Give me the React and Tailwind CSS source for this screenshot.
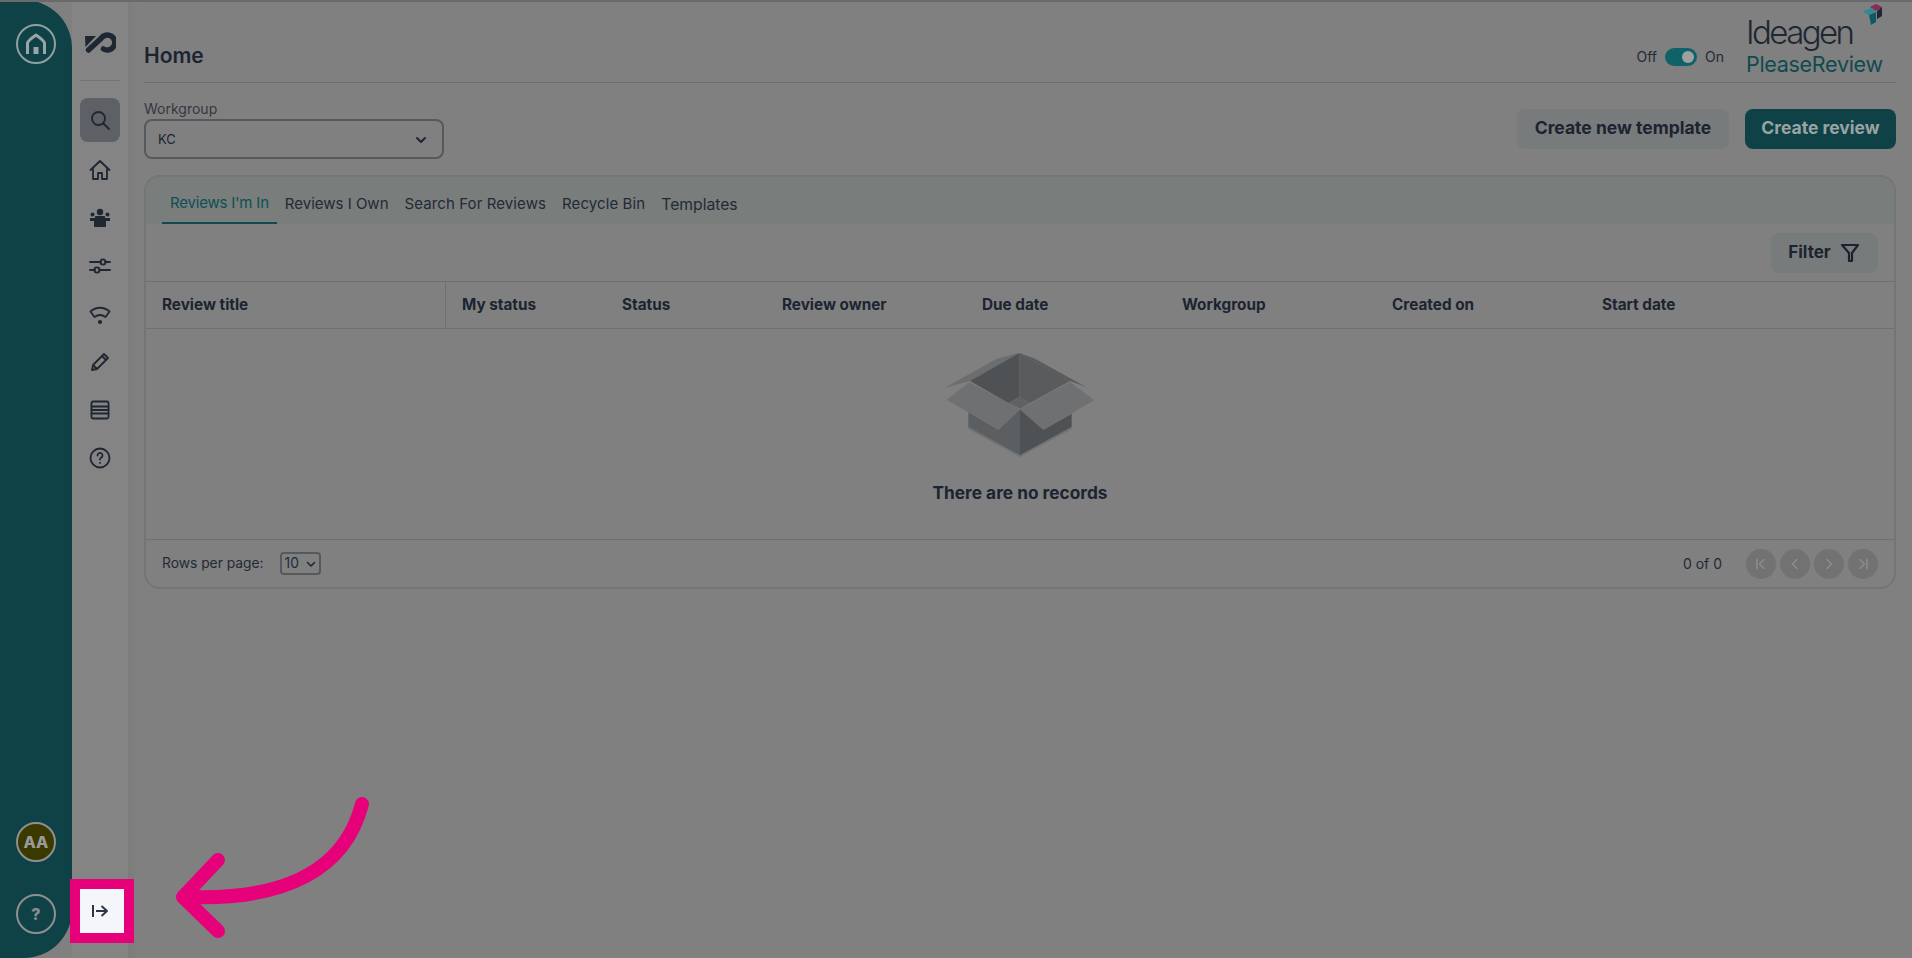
import React from "react";

const FONT = "font-['Inter','Liberation_Sans',sans-serif]";

function NavIcon({ children, active }) {
  return (
    <div className={active ? "flex h-11 w-10 items-center justify-center rounded-lg bg-[#5d6165]" : "flex h-12 w-10 items-center justify-center"}>
      <svg width="24" height="24" viewBox="0 0 24 24" fill="none" stroke="#1f2732" strokeWidth="1.8" strokeLinecap="round" strokeLinejoin="round">
        {children}
      </svg>
    </div>
  );
}

function Box() {
  return (
    <svg width="150" height="104" viewBox="195 68 450 312">
      <polygon points="195,172 350,85 418,68 270,152" fill="#6b6d6e" />
      <polygon points="418,68 465,85 618,170 570,152" fill="#595b5d" />
      <polygon points="270,152 418,68 418,200 385,218" fill="#4f5255" />
      <polygon points="418,68 570,152 450,218 418,200" fill="#595b5d" />
      <polygon points="385,218 418,200 450,218 420,235" fill="#606264" />
      <polygon points="265,245 355,298 420,237 420,375 265,290" fill="#5c5f61" />
      <polygon points="420,237 490,298 575,250 575,290 420,375" fill="#4f5255" />
      <polygon points="265,290 420,375 575,290 575,296 420,380 265,296" fill="#6f7172" />
      <polygon points="200,208 268,155 420,237 355,298" fill="#6e7071" />
      <polygon points="420,237 570,155 643,210 490,298" fill="#6e7071" />
    </svg>
  );
}

function PageBtn({ d, bar }) {
  return (
    <div className="flex h-[30px] w-[30px] items-center justify-center rounded-full bg-[#727272]">
      <svg width="16" height="16" viewBox="0 0 16 16" fill="none" stroke="#8c8c8c" strokeWidth="1.6" strokeLinecap="round" strokeLinejoin="round">
        <path d={d} />
        {bar && <path d={bar} />}
      </svg>
    </div>
  );
}

const columns = [
  ["My status", "w-[160px]"],
  ["Status", "w-[160px]"],
  ["Review owner", "w-[200px]"],
  ["Due date", "w-[200px]"],
  ["Workgroup", "w-[210px]"],
  ["Created on", "w-[210px]"],
  ["Start date", "w-[200px]"],
];

export default function App() {
  return (
    <div className={`relative flex h-screen w-full overflow-hidden border-t-2 border-[#6a6a6a] bg-[#808080] text-[#1c2431] ${FONT}`}>
      {/* Rail */}
      <div className="-mt-0.5 flex w-[72px] shrink-0 flex-col items-center justify-between rounded-r-[48px] bg-[#0f4247] pb-[24px] pt-[24px]">
        <div className="flex h-10 w-10 items-center justify-center rounded-full border-2 border-[#8f9f9f]">
          <svg width="26" height="26" viewBox="0 0 26 26" fill="none" stroke="#9aa6a6" strokeWidth="3" strokeLinecap="butt" strokeLinejoin="round">
            <path d="M4.500 23V12C4.500 10 13 4 13 4s8.500 6 8.500 8v11" />
            <path d="M10.500 23v-7h5v7z" fill="#9aa6a6" stroke="none" />
          </svg>
        </div>
        <div className="flex flex-col items-center gap-8">
          <div className="flex h-10 w-10 items-center justify-center rounded-full border-2 border-[#8f8f8f] bg-[#3a3a00] text-base font-extrabold text-[#9a9a9a]">AA</div>
          <div className="flex h-10 w-10 items-center justify-center rounded-full border-2 border-[#8f8f8f] text-base font-extrabold text-[#8a8f8f]">?</div>
        </div>
      </div>

      {/* Secondary nav */}
      <div className="flex w-[56px] shrink-0 flex-col items-center bg-[#848484] shadow-[4px_0_8px_rgba(0,0,0,0.04)]">
        <div className="flex h-[79px] w-10 items-center justify-center border-b border-[#747474] pt-[3px]">
          <svg width="32" height="22" viewBox="0 0 32 22" fill="none" stroke="#1f2732" strokeWidth="5.500" strokeLinejoin="round" strokeLinecap="round">
            <path d="M4.500 18L17 6.500A7.500 7.500 0 1 1 19.500 17" />
            <polygon points="1,4 12,4 1.500,15" fill="#1f2732" stroke="none" />
          </svg>
        </div>
        <div className="mt-[17px] flex flex-col items-center gap-1">
          <NavIcon active>
            <circle cx="10.5" cy="10.5" r="6.5" />
            <path d="M15.5 15.5L21 21" />
          </NavIcon>
          <div className="flex flex-col items-center">
            <NavIcon>
              <path d="M2.5 12L12 3l9.5 9M5 10.5V21h5v-6h4v6h5V10.5" />
            </NavIcon>
            <NavIcon>
              <g fill="#1f2732" stroke="none">
                <circle cx="12" cy="6" r="3.2" />
                <circle cx="4.5" cy="8.5" r="2" />
                <circle cx="19.5" cy="8.5" r="2" />
                <path d="M2 12h20v3h-4v6H6v-6H2zM7 10h10v2H7z" />
              </g>
            </NavIcon>
            <NavIcon>
              <path d="M2 8h11M17 8h5M2 16h5M11 16h11" />
              <circle cx="15" cy="8" r="2.6" />
              <circle cx="9" cy="16" r="2.6" />
            </NavIcon>
            <NavIcon>
              <path d="M2.5 9.5C8 4.5 16 4.5 21.5 9.5L17.5 15C14 12.5 10 12.5 6.500 15z" />
              <circle cx="12" cy="20" r="1.2" fill="#1f2732" />
            </NavIcon>
            <NavIcon>
              <path d="M4 20l1-5L16 4l4 4L9 19zM14 6l4 4M5 15l4 4" />
            </NavIcon>
            <NavIcon>
              <rect x="3.500" y="3.500" width="17" height="17" rx="1.500" />
              <path d="M3.500 8.500h17M3.500 12h17M3.500 15.500h17" />
            </NavIcon>
            <NavIcon>
              <circle cx="12" cy="12" r="9.500" />
              <path d="M9.500 9.500a2.500 2.500 0 1 1 3.800 2.100c-.9.600-1.300 1-1.300 2" />
              <path d="M12 16.800v.2" />
            </NavIcon>
          </div>
        </div>
      </div>

      {/* Main */}
      <div className="flex min-w-0 flex-1 flex-col pl-4 pr-4">
        <div className="flex h-[81px] shrink-0 items-end justify-between border-b border-[#6d6d6d]">
          <div className="mb-[12px] text-[21px] font-semibold leading-7">Home</div>
          <div className="flex items-end">
            <div className="mb-[16px] flex items-center gap-2 text-sm leading-[18px] text-[#232a36]">
              <span>Off</span>
              <span className="flex h-[18px] w-8 items-center justify-end rounded-full bg-[#0f6268] pr-[3px]">
                <span className="h-3 w-3 rounded-full bg-[#a0a0a0]" />
              </span>
              <span>On</span>
            </div>
            <div className="relative ml-[22px] mr-[10px] flex w-[140px] flex-col">
              <div className="mb-[2px] text-[33px] font-light leading-[36px] tracking-[-2.6px] text-[#1f2732]">Ideagen</div>
              <div className="mb-[6px] text-[21.5px] font-normal leading-[24px] tracking-[-0.3px] text-[#0f4a50]">PleaseReview</div>
              <svg className="absolute -top-[10px] left-[117px]" width="20" height="27" viewBox="0 0 20 27">
                <polygon points="7,3 13,0 19,3 13,7" fill="#8a2a55" />
                <polygon points="19,3 19,12 14,15 14,7" fill="#1f2732" />
                <polygon points="0,7 8,4 13,7 5,11" fill="#2f8a94" />
                <polygon points="6,11 13,8 13,18 8,21" fill="#0f5a60" />
              </svg>
            </div>
          </div>
        </div>

        <div className="mt-[15px] flex shrink-0 items-start justify-between">
          <div className="flex flex-col">
            <div className="text-sm leading-[21px] text-[#33383f]">Workgroup</div>
            <div className="flex h-10 w-[300px] items-center justify-between rounded-lg border-2 border-[#55585c] pl-[12px] pr-[14px] pt-[1px] text-[13px]">
              <span>KC</span>
              <svg width="14" height="14" viewBox="0 0 14 14" fill="none" stroke="#1f2732" strokeWidth="2" strokeLinecap="round" strokeLinejoin="round"><path d="M3 5l4 4 4-4" /></svg>
            </div>
          </div>
          <div className="mt-[11px] flex gap-4">
            <div className="flex h-10 w-[212px] items-center justify-center rounded-lg bg-[#787b7b] pb-[2px] text-[17.5px] font-bold">Create new template</div>
            <div className="flex h-10 w-[151px] items-center justify-center rounded-lg bg-[#0f4247] pb-[2px] text-[17.5px] font-bold text-[#9aa3a3]">Create review</div>
          </div>
        </div>

        <div className="mt-4 flex h-[414px] shrink-0 flex-col overflow-hidden rounded-2xl border-2 border-[#747575]">
          <div className="flex h-[47px] shrink-0 items-end bg-[#797d7b] pl-4 text-[15px] text-[#232a36]">
            <div className="flex h-full items-center border-b-2 border-[#0f4a50] px-2 pt-[7px] tracking-[-0.2px] text-[#0f4f55]">Reviews I'm In</div>
            <div className="flex h-full items-center px-2 pt-[8px]">Reviews I Own</div>
            <div className="flex h-full items-center px-2 pt-[8px] tracking-[0.1px]">Search For Reviews</div>
            <div className="flex h-full items-center px-2 pt-[8px] tracking-[0.1px]">Recycle Bin</div>
            <div className="flex h-full items-center px-2 pt-[8px] text-[15.7px]">Templates</div>
          </div>
          <div className="flex h-[58px] shrink-0 items-center justify-end border-b border-[#6f7070] pr-4">
            <div className="flex h-10 w-[107px] items-center justify-center gap-2 rounded-lg bg-[#787b7b] text-[17px] font-bold">
              Filter
              <svg width="22" height="22" viewBox="0 0 22 22" fill="none" stroke="#1a2230" strokeWidth="2.2" strokeLinecap="round" strokeLinejoin="round"><path d="M3 3h16l-6 8v8h-3v-8z" /></svg>
            </div>
          </div>
          <div className="flex h-[47px] shrink-0 items-stretch border-b border-[#6f7070] text-[15.3px] font-bold">
            <div className="flex w-[300px] items-center border-r border-[#6f7070] pl-4 pt-[1px]">Review title</div>
            <div className="flex flex-1 items-center pl-4">
              {columns.map(([label, w]) => (
                <div key={label} className={w}>{label}</div>
              ))}
            </div>
          </div>
          <div className="flex flex-1 flex-col items-center pt-[24px]">
            <Box />
            <div className="mt-[26px] text-[17.3px] font-bold leading-5">There are no records</div>
          </div>
          <div className="flex h-[48px] shrink-0 items-center border-t border-[#6f7070] pl-4 pr-4 text-[13.8px] text-[#232a36]">
            <span>Rows per page:</span>
            <div className="ml-4 flex h-[23px] w-[41px] items-center justify-between rounded border-2 border-[#55585c] pl-[3px] pr-[2px]">
              <span>10</span>
              <svg width="12" height="12" viewBox="0 0 12 12" fill="none" stroke="#1f2732" strokeWidth="1.6" strokeLinecap="round" strokeLinejoin="round"><path d="M2.500 4.500L6 8l3.500-3.500" /></svg>
            </div>
            <span className="ml-auto mr-6 text-sm">0 of 0</span>
            <div className="flex gap-1">
              <PageBtn d="M11 3.500L6.500 8l4.500 4.500" bar="M4 3.500v9" />
              <PageBtn d="M10 3.500L5.500 8l4.500 4.500" />
              <PageBtn d="M6 3.500L10.500 8 6 12.500" />
              <PageBtn d="M5 3.500L9.500 8 5 12.500" bar="M12 3.500v9" />
            </div>
          </div>
        </div>
      </div>

      {/* Highlight over the collapse button */}
      <div className="absolute left-[70px] top-[877px] flex h-16 w-16 items-center justify-center border-[10px] border-[#e6007a] bg-[#f5f6f9] pr-1">
        <svg width="18" height="14" viewBox="0 0 18 14" fill="none" stroke="#2c3646" strokeWidth="2" strokeLinejoin="round">
          <path d="M2 1v12M5 7h11M10.500 2L16 7l-5.500 5" />
        </svg>
      </div>

      {/* Pointing arrow */}
      <svg className="absolute left-[170px] top-[788px]" width="210" height="160" viewBox="170 790 210 160" fill="none" stroke="#e6007a" strokeWidth="14" strokeLinecap="round" strokeLinejoin="round">
        <path d="M362 804C345 870 285 900 190 897" />
        <path d="M218 860L183 897L218 931" />
      </svg>
    </div>
  );
}
